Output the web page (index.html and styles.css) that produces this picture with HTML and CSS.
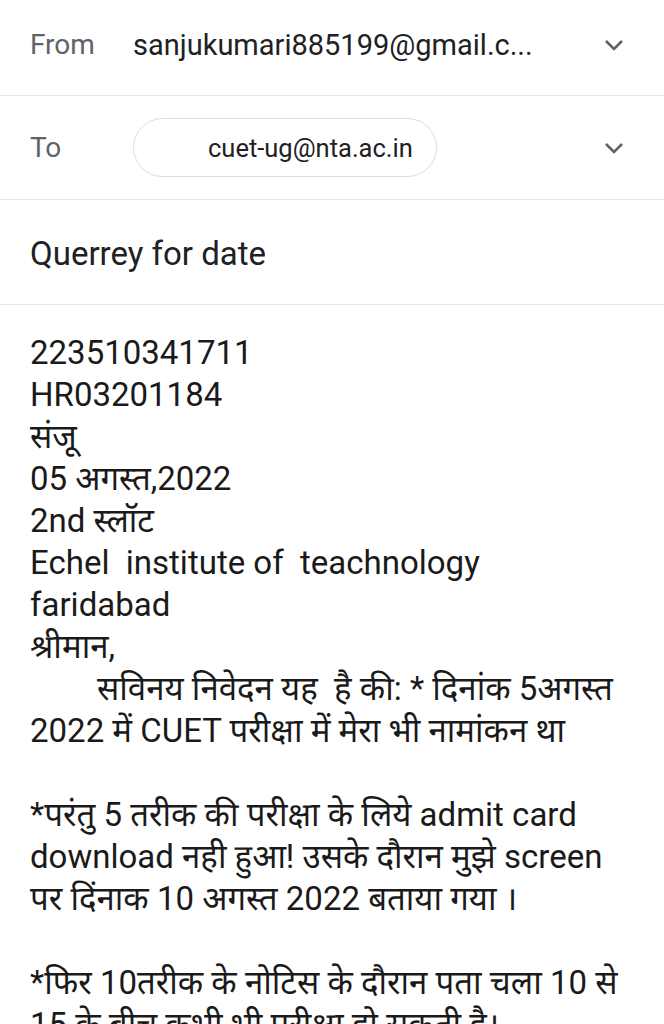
FILE: index.html
```html
<!DOCTYPE html>
<html lang="hi">
<head>
<meta charset="utf-8">
<title>Compose</title>
<link rel="stylesheet" href="styles.css">
</head>
<body>
<div class="compose">
  <div class="row row-from">
    <span class="label">From</span>
    <span class="from-addr">sanjukumari885199@gmail.c...</span>
    <svg class="chev" viewBox="0 0 24 24" width="24" height="24"><path d="M4 8l8 8 8-8" fill="none" stroke="#5f6368" stroke-width="2.6"/></svg>
  </div>
  <div class="row row-to">
    <span class="label">To</span>
    <span class="chip">cuet-ug@nta.ac.in</span>
    <svg class="chev" viewBox="0 0 24 24" width="24" height="24"><path d="M4 8l8 8 8-8" fill="none" stroke="#5f6368" stroke-width="2.6"/></svg>
  </div>
  <div class="row row-subject">
    <span class="subject">Querrey for date</span>
  </div>
  <div class="body-text">223510341711
HR03201184
संजू
05 अगस्त,2022
2nd स्लॉट
Echel  institute of  teachnology
faridabad
श्रीमान,
<span class="indent">सविनय निवेदन यह  है की: * दिनांक 5अगस्त</span>
2022 में CUET परीक्षा में मेरा भी नामांकन था

*परंतु 5 तरीक की परीक्षा के लिये admit card
download नही हुआ! उसके दौरान मुझे screen
पर दिंनाक 10 अगस्त 2022 बताया गया ।

*फिर 10तरीक के नोटिस के दौरान पता चला 10 से
15 के बीच कभी भी परीक्षा हो सकती है।...</div>
</div>
</body>
</html>
```

FILE: styles.css
```css
html, body {
  margin: 0;
  padding: 0;
  background: #ffffff;
}

.compose {
  width: 664px;
  font-family: Roboto, "Noto Sans Devanagari", "Noto Sans", "DejaVu Sans", sans-serif;
  color: #202124;
}

.row {
  display: flex;
  align-items: center;
  padding: 0 38px 0 30px;
  border-bottom: 1px solid #e6e6e6;
  box-sizing: border-box;
}

.row-from {
  height: 96px;
  padding-bottom: 6px;
}

.row-to {
  height: 104px;
}

.row-subject {
  height: 105px;
  padding-top: 3px;
}

.label {
  width: 103px;
  flex: none;
  font-size: 28px;
  color: #5f6368;
}

.from-addr {
  flex: 1;
  font-size: 29px;
  color: #202124;
  white-space: nowrap;
}

.chip {
  box-sizing: border-box;
  height: 59px;
  width: 304px;
  display: flex;
  align-items: center;
  padding-left: 74px;
  border: 1.5px solid #dadce0;
  border-radius: 30px;
  font-size: 25.5px;
  color: #202124;
  white-space: nowrap;
}

.row-to .chip {
  margin-right: auto;
}

.chev {
  flex: none;
  width: 24px;
  height: 24px;
}

.subject {
  font-size: 33px;
  color: #202124;
}

.body-text {
  padding: 27px 30px 0 30px;
  font-size: 33px;
  line-height: 42px;
  white-space: pre-wrap;
  color: #1a1a1a;
}

.indent {
  padding-left: 67px;
}
```
